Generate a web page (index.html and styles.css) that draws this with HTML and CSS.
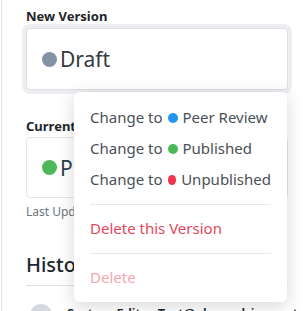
FILE: index.html
```html
<!DOCTYPE html>
<html>
<head>
<meta charset="utf-8">
<link rel="stylesheet" href="styles.css">
</head>
<body>
<div class="page">
  <div class="group">
    <div class="label">New Version</div>
    <div class="select focus">
      <span class="dot dot-grey"></span><span class="value">Draft</span>
    </div>
  </div>
  <div class="group group-current">
    <div class="label">Current Version</div>
    <div class="select">
      <span class="dot dot-green"></span><span class="value">Published</span>
    </div>
    <div class="muted">Last Updated 2 days ago</div>
  </div>
  <h2 class="history">History</h2>
  <div class="entry">
    <span class="avatar"></span>
    <span class="entry-text">System Editor Test@alexandria created</span>
  </div>

  <div class="menu">
    <div class="item">Change to <span class="mdot mdot-blue"></span> Peer Review</div>
    <div class="item">Change to <span class="mdot mdot-green"></span> Published</div>
    <div class="item">Change to <span class="mdot mdot-red"></span> Unpublished</div>
    <div class="divider"></div>
    <div class="item item-danger">Delete this Version</div>
    <div class="divider"></div>
    <div class="item item-disabled">Delete</div>
  </div>
</div>
</body>
</html>
```
FILE: styles.css
```css
html, body {
  margin: 0;
  padding: 0;
  background: #fff;
  font-family: "Noto Sans", "Open Sans", sans-serif;
  color: #212529;
}
.page {
  position: relative;
  margin-left: 1px;
  border-left: 1px solid #dee2e6;
  padding: 7px 18px 0 24px;
  height: 311px;
  box-sizing: border-box;
  overflow: hidden;
}
.label {
  font-size: 13px;
  font-weight: 700;
  line-height: 18px;
  color: #212529;
  margin-bottom: 3px;
}
.select {
  height: 62px;
  box-sizing: border-box;
  border: 1px solid #dcdfe3;
  border-radius: 4px;
  display: flex;
  align-items: center;
  padding-left: 15px;
  background: #fff;
}
.select.focus {
  box-shadow: 0 0 0 4px #eceef1;
}
.dot {
  width: 15px;
  height: 15px;
  border-radius: 50%;
  margin-right: 3px;
  flex: none;
}
.dot-grey { background: #8491a5; }
.dot-green { background: #4cb85a; }
.value {
  font-size: 21px;
  line-height: 28px;
  color: #343a40;
}
.group-current {
  margin-top: 27px;
}
.group-current .label {
  margin-bottom: 2px;
}
.group-current .select {
  height: 61px;
  border-color: #e3e6e9;
}
.group-current .value {
  color: #2c3e50;
}
.muted {
  font-size: 12px;
  line-height: 16px;
  color: #6c757d;
  margin-top: 6px;
}
.history {
  font-size: 20px;
  font-weight: 500;
  line-height: 26px;
  margin: 32px 0 0 0;
  padding-bottom: 7px;
  border-bottom: 1px solid #dee2e6;
  color: #212529;
}
.entry {
  display: flex;
  align-items: flex-start;
  gap: 15px;
  margin-top: 18px;
  padding-left: 4px;
}
.avatar {
  width: 22px;
  height: 22px;
  border-radius: 50%;
  background: #d5dae0;
  flex: none;
}
.entry-text {
  font-size: 13px;
  font-weight: 600;
  line-height: 18px;
  color: #212529;
  white-space: nowrap;
}
.menu {
  position: absolute;
  left: 72px;
  top: 92px;
  width: 213px;
  box-sizing: border-box;
  padding: 10px 16px 9px;
  background: #fff;
  border-radius: 5px;
  box-shadow: 0 4px 18px rgba(0, 0, 0, 0.16);
}
.item {
  font-size: 15px;
  line-height: 19px;
  padding: 6px 0;
  color: #495057;
  white-space: nowrap;
  display: flex;
  align-items: center;
}
.mdot {
  display: inline-block;
  width: 10px;
  height: 10px;
  border-radius: 50%;
  margin: 0 5px 0 5px;
}
.mdot-blue { background: #2196f3; }
.mdot-green { background: #4cb85a; }
.mdot-red { background: #f0364c; }
.divider {
  height: 1px;
  background: #e6e8eb;
  margin: 9px 0 8px;
}
.item-danger { color: #e4485b; }
.item-disabled { color: #f4a6ae; }
```
